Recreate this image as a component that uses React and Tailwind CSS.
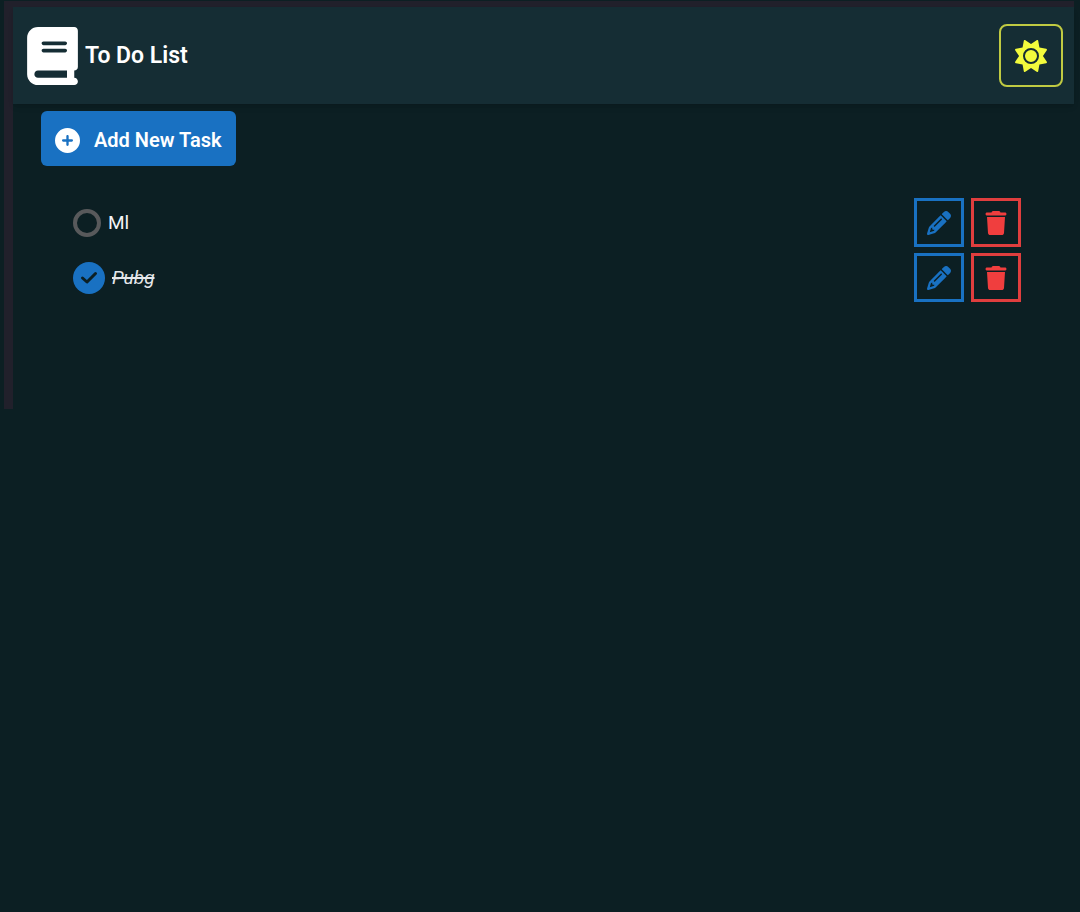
import { useState } from "react";
import { FaBook, FaSun, FaCirclePlus, FaPencil, FaTrash } from "react-icons/fa6";

function Task({ task, onToggle }) {
  const id = `task-${task.id}`;
  return (
    <li className="flex items-center justify-between">
      <div className="flex items-center gap-[7px]">
        <span className="relative flex">
          <input
            id={id}
            type="checkbox"
            checked={task.done}
            onChange={onToggle}
            className={
              task.done
                ? "size-8 appearance-none rounded-full bg-[#1971c2]"
                : "size-7 appearance-none rounded-full border-4 border-[#58595b]"
            }
          />
          {task.done && (
            <svg
              viewBox="0 0 32 32"
              className="pointer-events-none absolute inset-0 size-8"
              fill="none"
              stroke="#0c1f23"
              strokeWidth="3"
              strokeLinecap="round"
              strokeLinejoin="round"
            >
              <path d="M9.5 16 14 20 22.5 11.5" />
            </svg>
          )}
        </span>
        <label
          htmlFor={id}
          className={
            task.done
              ? "text-[19px] leading-7 italic text-gray-200 line-through decoration-2"
              : "text-[19px] leading-7 text-gray-100"
          }
        >
          {task.name}
        </label>
      </div>
      <div className="flex gap-[7px]">
        <button
          aria-label="Edit task"
          className="flex h-[49px] w-[50px] items-center justify-center border-3 border-[#1971c2] text-[#1971c2]"
        >
          <FaPencil className="size-6" />
        </button>
        <button
          aria-label="Delete task"
          className="flex h-[49px] w-[50px] items-center justify-center border-3 border-[#e03e3e] text-[#f03e3e]"
        >
          <FaTrash className="size-6" />
        </button>
      </div>
    </li>
  );
}

export default function App() {
  const [tasks, setTasks] = useState([
    { id: 1, name: "Ml", done: false },
    { id: 2, name: "Pubg", done: true },
  ]);
  const toggle = (id) =>
    setTasks(tasks.map((t) => (t.id === id ? { ...t, done: !t.done } : t)));

  return (
    <div className="min-h-screen bg-[#0c1f23] pt-px pr-1.5 pl-1 font-['Roboto',sans-serif]">
      <div className="border-t-6 border-l-9 border-[#21202b] pb-[107px]">
        <header className="flex items-center justify-between bg-[#152d34] py-[17px] pr-[11px] pl-3.5 shadow-md">
          <div className="flex items-center gap-[7px]">
            <FaBook className="h-[58px] w-[51px] text-white" />
            <h1 className="text-[23px] leading-9 font-semibold text-white">To Do List</h1>
          </div>
          <button
            aria-label="Switch theme"
            className="flex h-[63px] w-16 items-center justify-center rounded-lg border-2 border-[#c0ca42] text-[#f2fb3c]"
          >
            <FaSun className="size-8" />
          </button>
        </header>
        <main className="pt-[7px] pr-[53px] pl-7">
          <button className="flex h-[55px] items-center gap-3.5 rounded-md bg-[#1971c2] px-3.5 text-xl font-semibold text-white">
            <FaCirclePlus className="mt-1 size-[25px]" />
            <span className="pt-0.5">Add New Task</span>
          </button>
          <ul className="mt-8 flex flex-col gap-1.5 pl-8">
            {tasks.map((t) => (
              <Task key={t.id} task={t} onToggle={() => toggle(t.id)} />
            ))}
          </ul>
        </main>
      </div>
    </div>
  );
}
